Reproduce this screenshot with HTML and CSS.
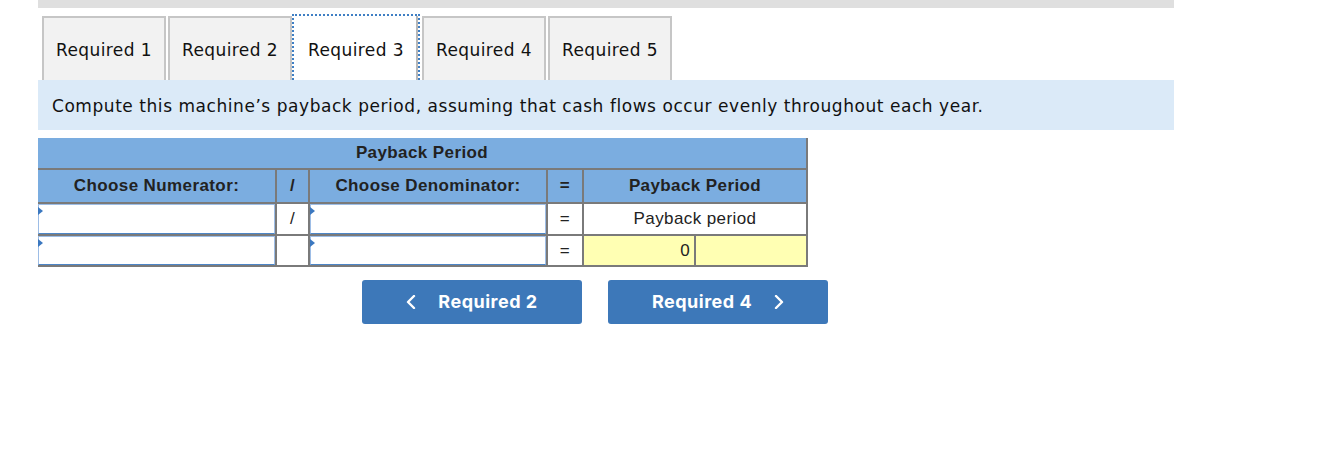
FILE: index.html
```html
<!DOCTYPE html>
<html>
<head>
<meta charset="utf-8">
<link rel="stylesheet" href="styles.css">
</head>
<body>
<div class="page">
  <div class="topbar"></div>
  <div class="tabs">
    <div class="tab">Required 1</div>
    <div class="tab">Required 2</div>
    <div class="tab active">Required 3</div>
    <div class="tab">Required 4</div>
    <div class="tab">Required 5</div>
  </div>
  <div class="prompt">Compute this machine’s payback period, assuming that cash flows occur evenly throughout each year.</div>
  <div class="grid">
    <div class="cell head span">Payback Period</div>
    <div class="cell head">Choose Numerator:</div>
    <div class="cell head">/</div>
    <div class="cell head">Choose Denominator:</div>
    <div class="cell head">=</div>
    <div class="cell head">Payback Period</div>

    <div class="cell inputcell"><div class="input"></div></div>
    <div class="cell plain">/</div>
    <div class="cell inputcell"><div class="input"></div></div>
    <div class="cell plain">=</div>
    <div class="cell plain">Payback period</div>

    <div class="cell inputcell"><div class="input"></div></div>
    <div class="cell plain"></div>
    <div class="cell inputcell"><div class="input"></div></div>
    <div class="cell plain">=</div>
    <div class="cell result">
      <div class="res-val">0</div>
      <div class="res-unit"></div>
    </div>
  </div>
  <div class="nav">
    <button class="btn">
      <svg class="chev" width="10" height="14" viewBox="0 0 10 14"><polyline points="8,1 2,7 8,13" fill="none" stroke="#fff" stroke-width="2.4" stroke-linecap="round" stroke-linejoin="round"/></svg>
      <span>Required 2</span>
    </button>
    <button class="btn">
      <span>Required 4</span>
      <svg class="chev" width="10" height="14" viewBox="0 0 10 14"><polyline points="2,1 8,7 2,13" fill="none" stroke="#fff" stroke-width="2.4" stroke-linecap="round" stroke-linejoin="round"/></svg>
    </button>
  </div>
</div>
</body>
</html>
```
FILE: styles.css
```css
* { box-sizing: border-box; }
html, body { margin: 0; padding: 0; background: #fff; }
body { font-family: "DejaVu Sans", Verdana, sans-serif; color: #1a1a1a; }

.page { margin-left: 38px; width: 1136px; }

.topbar { height: 8px; background: #dfdfdf; }

.tabs {
  display: flex;
  align-items: flex-end;
  padding-left: 4px;
  margin-top: 6px;
  height: 66px;
}
.tab {
  width: 124px;
  height: 64px;
  margin-right: 2px;
  background: #f2f2f2;
  border: 2px solid #c6c6c6;
  border-bottom: none;
  display: flex;
  align-items: center;
  justify-content: center;
  font-size: 17px;
  letter-spacing: 0.4px;
  color: #111;
  padding-top: 1px;
}
.tab.active {
  width: 128px;
  height: 66px;
  margin-left: -2px;
  background: #fff;
  border: 2px dotted #3f7fc4;
  border-bottom: none;
  box-shadow: inset -2px 0 0 #b8b8b8;
  padding-top: 3px;
}

.prompt {
  height: 50px;
  background: #dbeaf8;
  display: flex;
  align-items: center;
  padding-left: 14px;
  padding-top: 1px;
  font-size: 17px;
  letter-spacing: 0.55px;
  color: #111;
}

.grid {
  margin-top: 8px;
  width: 770px;
  display: grid;
  grid-template-columns: 237px 31px 236px 34px 222px;
  grid-template-rows: 30px 32px 30px 29px;
  gap: 2px;
  padding: 0 2px 2px 0;
  background: #7a7a7a;
  font-family: "Liberation Sans", Arial, sans-serif;
  font-size: 17px;
  letter-spacing: 0.4px;
}
.cell {
  display: flex;
  align-items: center;
  justify-content: center;
  background: #fff;
  color: #222;
}
.head { background: #7badE0; font-weight: bold; color: #222; }
.span { grid-column: 1 / -1; }
.plain { color: #222; }

.inputcell { align-items: stretch; justify-content: stretch; }
.input {
  flex: 1;
  position: relative;
  background: #fff;
  border: 1px solid #9dbde6;
  border-bottom: 1.5px solid #4d86c7;
}
.input::before {
  content: "";
  position: absolute;
  left: -1px;
  top: 2px;
  border-left: 5px solid #3b78c0;
  border-top: 4px solid transparent;
  border-bottom: 4px solid transparent;
}

.result { background: #7a7a7a; gap: 2px; align-items: stretch; justify-content: stretch; }
.res-val {
  width: 110px;
  background: #ffffb3;
  display: flex;
  align-items: center;
  justify-content: flex-end;
  padding-right: 4px;
  color: #222;
}
.res-unit { flex: 1; background: #ffffb3; }

.nav {
  display: flex;
  gap: 26px;
  padding-left: 324px;
  margin-top: 13px;
}
.btn {
  width: 220px;
  height: 44px;
  border: none;
  border-radius: 3px;
  background: #3d78b9;
  color: #fff;
  font-family: Inter, "Liberation Sans", sans-serif;
  font-weight: 700;
  font-size: 18px;
  letter-spacing: 0.5px;
  display: flex;
  align-items: center;
  justify-content: center;
  gap: 22px;
  padding: 0 0 1px 0;
}
.chev { display: block; }
```
